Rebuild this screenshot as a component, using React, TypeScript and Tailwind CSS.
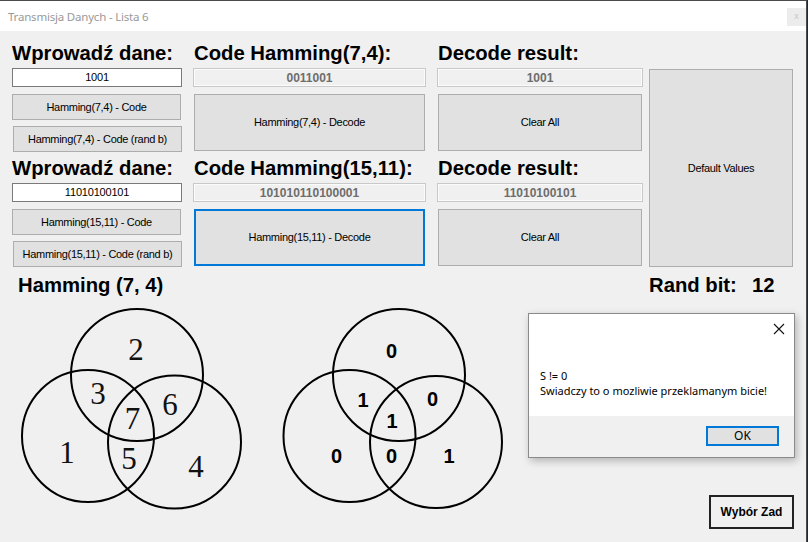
import React from 'react';

const sans = "font-['Liberation_Sans',Arial,sans-serif]";
const ui = "font-['Noto_Sans','Open_Sans',sans-serif]";

const btnBase =
  'flex items-center justify-center bg-[#e1e1e1] text-[11px] tracking-[-0.3px] text-black ' + sans;
const btn = btnBase + ' border border-[#adadad]';
const outBox =
  'flex h-[19px] items-center justify-center border border-[#c9c9c9] bg-[#f0f0f0] shadow-[inset_0_0_0_1px_#fbfbfb] text-[12px] font-bold text-[#6d6d6d] ' + sans;
const inBox =
  'flex h-[19px] items-center justify-center border border-[#7a7a7a] bg-white text-[11px] tracking-[-0.2px] text-black ' + sans;
const heading = 'h-[24px] whitespace-nowrap text-[20.3px] font-bold leading-[24px] text-black ' + sans;

type SectionProps = {
  input: string;
  code: string;
  decoded: string;
  title: string;
  focused?: boolean;
};

const Section: React.FC<SectionProps> = ({ input, code, decoded, title, focused }) => (
  <div className="flex">
    <div className="flex w-[170px] flex-col">
      <div className={heading}>Wprowadź dane:</div>
      <div className={inBox + ' mt-[3px]'}>{input}</div>
      <div className={btn + ' mt-[7px] h-[26px] w-[169px]'}>{title} - Code</div>
      <div className={btn + ' ml-[1px] mt-[6px] h-[26px] w-[169px]'}>{title} - Code (rand b)</div>
    </div>
    <div className="ml-[11px] flex w-[233px] flex-col">
      <div className={heading + ' pl-[1px]'}>Code {title}:</div>
      <div className={outBox + ' mt-[3px]'}>{code}</div>
      <div
        className={
          (focused ? btnBase + ' border-2 border-[#0078d7]' : btn) + ' ml-[1px] mt-[7px] h-[57px] w-[231px]'
        }
      >
        {title} - Decode
      </div>
    </div>
    <div className="ml-[11px] flex w-[206px] flex-col">
      <div className={heading + ' pl-[1px]'}>Decode result:</div>
      <div className={outBox + ' mt-[3px]'}>{decoded}</div>
      <div className={btn + ' ml-[1px] mt-[7px] h-[57px] w-[204px]'}>Clear All</div>
    </div>
  </div>
);

const VennNumbers: React.FC = () => {
  const serif = "'Liberation Serif', 'DejaVu Serif', serif";
  const nums: [string, number, number][] = [
    ['2', 118, 57],
    ['3', 80, 101],
    ['7', 114.5, 126],
    ['6', 152, 112],
    ['1', 49, 160],
    ['5', 111, 166],
    ['4', 178, 174],
  ];
  return (
    <svg width="230" height="210" viewBox="0 0 230 210">
      <g fill="none" stroke="#000" strokeWidth="2">
        <circle cx="119" cy="72" r="66" />
        <circle cx="70" cy="133" r="66" />
        <circle cx="156.5" cy="139" r="66.5" />
      </g>
      {nums.map(([t, x, y], i) => (
        <text key={i} x={x} y={y} textAnchor="middle" fontFamily={serif} fontSize="31" fill="#111">
          {t}
        </text>
      ))}
    </svg>
  );
};

const VennBits: React.FC = () => {
  const bits: [string, number, number][] = [
    ['0', 112.5, 55],
    ['1', 84, 104],
    ['0', 153.5, 103],
    ['1', 113, 125],
    ['0', 57.5, 160],
    ['0', 112.5, 160],
    ['1', 170, 160],
  ];
  return (
    <svg width="230" height="210" viewBox="0 0 230 210">
      <g fill="none" stroke="#000" strokeWidth="2">
        <circle cx="120" cy="72" r="66" />
        <circle cx="70.5" cy="133" r="66" />
        <circle cx="157" cy="139" r="66" />
      </g>
      {bits.map(([t, x, y], i) => (
        <text
          key={i}
          x={x}
          y={y}
          textAnchor="middle"
          fontFamily="'Liberation Sans', Arial, sans-serif"
          fontWeight="bold"
          fontSize="20"
          fill="#000"
        >
          {t}
        </text>
      ))}
    </svg>
  );
};

const MessageBox: React.FC = () => (
  <div className="absolute left-[528px] top-[313px] flex h-[145px] w-[267px] flex-col border border-[#8a8a8a] bg-white shadow-[2px_3px_8px_rgba(0,0,0,0.25)]">
    <div className="flex h-[102px] flex-col bg-white">
      <div className="flex justify-end pr-[9px] pt-[9px]">
        <svg width="12" height="12" viewBox="0 0 12 12">
          <path d="M1 1 L11 11 M11 1 L1 11" stroke="#111" strokeWidth="1.1" fill="none" />
        </svg>
      </div>
      <div className={'ml-[11px] mt-[33px] text-[11px] leading-[15px] text-black ' + ui}>
        <div>S != 0</div>
        <div>Swiadczy to o mozliwie przeklamanym bicie!</div>
      </div>
    </div>
    <div className="flex flex-1 justify-end bg-[#f0f0f0] pr-[15px] pt-[10px]">
      <div
        className={
          'flex h-[20px] w-[73px] items-center justify-center border-2 border-[#0078d7] bg-[#e1e1e1] text-[12px] text-black ' +
          ui
        }
      >
        OK
      </div>
    </div>
  </div>
);

export default function App() {
  return (
    <div className="relative h-[542px] w-[808px] overflow-hidden bg-[#1e2a3a]">
      <div className="flex h-[542px] w-[807px] flex-col border-r border-t border-[#4a4a4a] bg-[#f0f0f0]">
        {/* title bar */}
        <div className="flex h-[30px] items-start justify-between bg-white">
          <div className={'pl-[8px] pt-[7px] text-[11.5px] tracking-[-0.2px] text-[#999999] ' + ui}>
            Transmisja Danych - Lista 6
          </div>
          <div className={'mt-[7px] flex h-[18px] w-[19px] items-center justify-center bg-[#ececec] text-[9px] text-[#c8c8c8] ' + sans}>
            x
          </div>
        </div>

        {/* client */}
        <div className="flex flex-1 flex-col bg-[#f0f0f0]">
          <div className="flex pl-[12px] pt-[10px]">
            <div className="flex flex-col">
              <Section input="1001" code="0011001" decoded="1001" title="Hamming(7,4)" />
              <div className="mt-[4px]">
                <Section
                  input="11010100101"
                  code="101010110100001"
                  decoded="11010100101"
                  title="Hamming(15,11)"
                  focused
                />
              </div>
            </div>
            <div className={btn + ' ml-[6px] mt-[28px] h-[198px] w-[144px]'}>Default Values</div>
          </div>

          <div className={'ml-[18px] mt-[6px] flex h-[24px] items-center text-[20.3px] font-bold leading-[24px] text-black ' + sans}>
            <div className="w-[631px]">Hamming (7, 4)</div>
            <div className="w-[103px]">Rand bit:</div>
            <div>12</div>
          </div>

          <div className="mt-[6px] flex items-start">
            <div className="ml-[18px]">
              <VennNumbers />
            </div>
            <div className="ml-[31px]">
              <VennBits />
            </div>
            <div
              className={
                'ml-[200px] mt-[192px] flex h-[34px] w-[85px] items-center justify-center border-2 border-[#222] bg-[#f0f0f0] text-[12px] font-bold text-black ' +
                sans
              }
            >
              Wybór Zad
            </div>
          </div>
        </div>
      </div>
      <MessageBox />
    </div>
  );
}
